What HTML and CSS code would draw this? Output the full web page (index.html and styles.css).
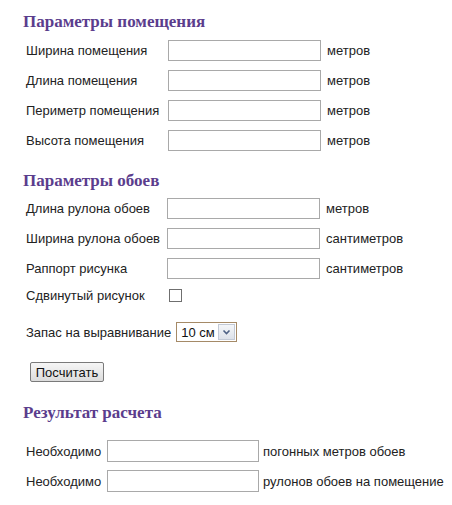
FILE: index.html
```html
<!DOCTYPE html>
<html lang="ru">
<head>
<meta charset="utf-8">
<title>Калькулятор обоев</title>
<link rel="stylesheet" href="styles.css">
</head>
<body>
<div class="page">
  <h2 class="title t1">Параметры помещения</h2>
  <div class="grid g1">
    <label class="lbl">Ширина помещения</label><input class="field" type="text"><span class="unit">метров</span>
    <label class="lbl">Длина помещения</label><input class="field" type="text"><span class="unit">метров</span>
    <label class="lbl">Периметр помещения</label><input class="field" type="text"><span class="unit">метров</span>
    <label class="lbl">Высота помещения</label><input class="field" type="text"><span class="unit">метров</span>
  </div>

  <h2 class="title t2">Параметры обоев</h2>
  <div class="grid g2">
    <label class="lbl">Длина рулона обоев</label><input class="field" type="text"><span class="unit">метров</span>
    <label class="lbl">Ширина рулона обоев</label><input class="field" type="text"><span class="unit">сантиметров</span>
    <label class="lbl">Раппорт рисунка</label><input class="field" type="text"><span class="unit">сантиметров</span>
    <label class="lbl chk-row">Сдвинутый рисунок</label><span class="chk-cell chk-row"><span class="chk"></span></span><span class="chk-row"></span>
  </div>

  <div class="sel-row">
    <span class="lbl">Запас на выравнивание</span>
    <span class="select">
      <span class="sel-val">10 см</span>
      <span class="sel-btn"><svg width="9" height="7" viewBox="0 0 9 7"><path d="M1.5 1.5 L4.5 4.5 L7.5 1.5" fill="none" stroke="#4d6185" stroke-width="1.6"/></svg></span>
    </span>
  </div>

  <div class="btn-row"><button class="btn" type="button">Посчитать</button></div>

  <h2 class="title t3">Результат расчета</h2>
  <div class="res">
    <div class="res-row"><span class="lbl">Необходимо</span><input class="field rf" type="text"><span class="unit">погонных метров обоев</span></div>
    <div class="res-row"><span class="lbl">Необходимо</span><input class="field rf" type="text"><span class="unit">рулонов обоев на помещение</span></div>
  </div>
</div>
</body>
</html>
```

FILE: styles.css
```css
html, body {
  margin: 0;
  padding: 0;
  background: #ffffff;
}
.page {
  font-family: "Liberation Sans", Arial, sans-serif;
  font-size: 13px;
  color: #222222;
  padding-left: 23px;
}
.title {
  font-family: "Liberation Serif", "Times New Roman", serif;
  font-weight: bold;
  font-size: 17px;
  line-height: 20px;
  color: #5b3d8d;
  margin: 0;
}
.t1 { padding-top: 12px; }
.t2 { margin-top: 15px; }
.t3 { margin-top: 16px; }

.grid {
  display: grid;
  grid-template-columns: 142px 153px auto;
  grid-auto-rows: 30px;
  align-items: center;
  padding-left: 3px;
}
.g1 { margin-top: 3.5px; }
.g2 { margin-top: 2.5px; grid-template-columns: 141px 153px auto; }
.grid .unit { padding-left: 6px; }
.lbl { white-space: nowrap; }

.field {
  box-sizing: border-box;
  width: 153px;
  height: 21px;
  margin: 0;
  border: 1px solid #a9a9a9;
  background: #ffffff;
  padding: 0 3px;
  font: 13px "Liberation Sans", Arial, sans-serif;
}
.chk-row { align-self: center; }
.g2 .chk-row { margin-top: -5px; }
.chk-cell { display: flex; padding-left: 2px; }
.chk {
  box-sizing: border-box;
  width: 13px;
  height: 13px;
  border: 1px solid #6f6f6f;
  background: #ffffff;
}

.sel-row {
  display: flex;
  align-items: center;
  gap: 5px;
  height: 30px;
  margin-top: 4px;
  padding-left: 3px;
}
.select {
  box-sizing: border-box;
  display: flex;
  align-items: stretch;
  width: 61px;
  height: 20px;
  border: 1px solid #a58a67;
  background: #ffffff;
}
.sel-val {
  flex: 1;
  display: flex;
  align-items: center;
  padding-left: 4px;
  font-size: 13px;
  color: #111111;
}
.sel-btn {
  box-sizing: border-box;
  width: 17px;
  display: flex;
  align-items: center;
  justify-content: center;
  margin: 1px;
  border: 1px solid #c3cad6;
  background: linear-gradient(#f4f6f9, #dde2ea);
}

.btn-row {
  height: 30px;
  display: flex;
  align-items: center;
  padding-left: 7px;
  margin-top: 10px;
}
.btn {
  box-sizing: border-box;
  width: 74px;
  height: 20px;
  padding: 0;
  border: 1px solid #7a7a7a;
  border-radius: 2px;
  background: linear-gradient(#f6f6f6, #dcdcdc);
  font: 13px "Liberation Sans", Arial, sans-serif;
  color: #111111;
}

.res { margin-top: 13px; padding-left: 3px; }
.res-row {
  display: flex;
  align-items: center;
  height: 30px;
}
.res-row .lbl { width: 81px; }
.rf { width: 152px; height: 22px; }
.res-row .unit { padding-left: 4px; white-space: nowrap; }
```
